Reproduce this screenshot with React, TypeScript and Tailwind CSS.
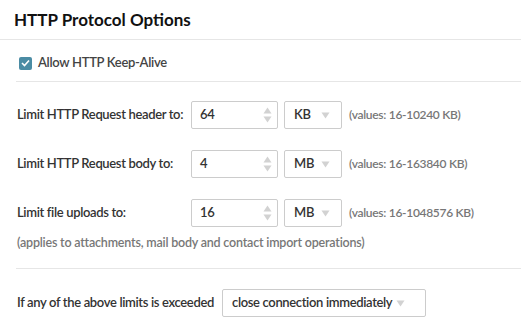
import React from "react";

const font = { fontFamily: "Lato, 'Noto Sans', sans-serif" };

function Spinner() {
  return (
    <svg width="9" height="18" viewBox="0 0 9 18" className="shrink-0">
      <path d="M4.5 1.5 L8.5 7.5 L0.5 7.5 Z" fill="#d2d2d2" />
      <path d="M4.5 16.5 L8.5 10.5 L0.5 10.5 Z" fill="#d2d2d2" />
    </svg>
  );
}

function Caret() {
  return (
    <svg width="9" height="7" viewBox="0 0 9 7" className="shrink-0">
      <path d="M0.5 0.5 L8.5 0.5 L4.5 6.5 Z" fill="#d2d2d2" />
    </svg>
  );
}

function NumInput({ value }: { value: string }) {
  return (
    <div className="flex h-[28px] w-[87px] items-center justify-between rounded-[2px] border border-[#cccccc] bg-white pl-[8px] pr-[5px] text-[13px] font-semibold tracking-[-0.2px] text-[#333]">
      <span>{value}</span>
      <Spinner />
    </div>
  );
}

function UnitSelect({ value }: { value: string }) {
  return (
    <div className="flex h-[28px] w-[58px] items-center justify-between rounded-[2px] border border-[#cccccc] bg-white pl-[9px] pr-[11px] text-[13px] font-semibold tracking-[-0.2px] text-[#333]">
      <span>{value}</span>
      <Caret />
    </div>
  );
}

function Row({ label, value, unit, range }: { label: string; value: string; unit: string; range: string }) {
  return (
    <div className="flex items-center">
      <div className="w-[174px] whitespace-nowrap text-[13px] font-semibold tracking-[-0.35px] text-[#333]">{label}</div>
      <NumInput value={value} />
      <div className="w-[6px]" />
      <UnitSelect value={unit} />
      <div className="ml-[7px] whitespace-nowrap text-[12px] font-semibold tracking-[-0.3px] text-[#777]">{range}</div>
    </div>
  );
}

export default function App() {
  return (
    <div className="h-[331px] w-[521px] overflow-hidden bg-white" style={font}>
      <div className="px-[14px] pt-[9px] pb-[8px] text-[17px] font-bold leading-[22px] text-[#111]">
        HTTP Protocol Options
      </div>
      <div className="h-px bg-[#e6e6e6]" />
      <div className="pl-[16px]">
        <div className="flex h-[41px] items-center gap-[6px] pl-[3px] pt-[5px]">
          <div className="flex h-[13px] w-[13px] items-center justify-center rounded-[2px] bg-[#4b8ca4]">
            <svg width="9" height="8" viewBox="0 0 9 8">
              <path d="M1 4 L3.5 6.5 L8 1.5" fill="none" stroke="white" strokeWidth="1.6" />
            </svg>
          </div>
          <span className="text-[13px] font-semibold tracking-[-0.3px] text-[#444]">Allow HTTP Keep-Alive</span>
        </div>
        <div className="h-px bg-[#e6e6e6]" />
        <div className="flex flex-col gap-[21px] pt-[19px] pl-[1px]">
          <Row label="Limit HTTP Request header to:" value="64" unit="KB" range="(values: 16-10240 KB)" />
          <Row label="Limit HTTP Request body to:" value="4" unit="MB" range="(values: 16-163840 KB)" />
          <Row label="Limit file uploads to:" value="16" unit="MB" range="(values: 16-1048576 KB)" />
        </div>
        <div className="pl-[1px] pt-[7px] pb-[16px] text-[12.5px] font-semibold leading-[18px] tracking-[-0.2px] text-[#777]">
          (applies to attachments, mail body and contact import operations)
        </div>
        <div className="h-px bg-[#e6e6e6]" />
        <div className="flex items-center pt-[20px] pl-[1px]">
          <span className="w-[205px] whitespace-nowrap text-[13px] font-semibold tracking-[-0.35px] text-[#333]">If any of the above limits is exceeded</span>
          <div className="flex h-[28px] w-[204px] items-center justify-between rounded-[2px] border border-[#cccccc] bg-white pl-[9px] pr-[20px] text-[13px] font-semibold text-[#333]">
            <span className="whitespace-nowrap tracking-[-0.35px]">close connection immediately</span>
            <Caret />
          </div>
        </div>
      </div>
    </div>
  );
}
